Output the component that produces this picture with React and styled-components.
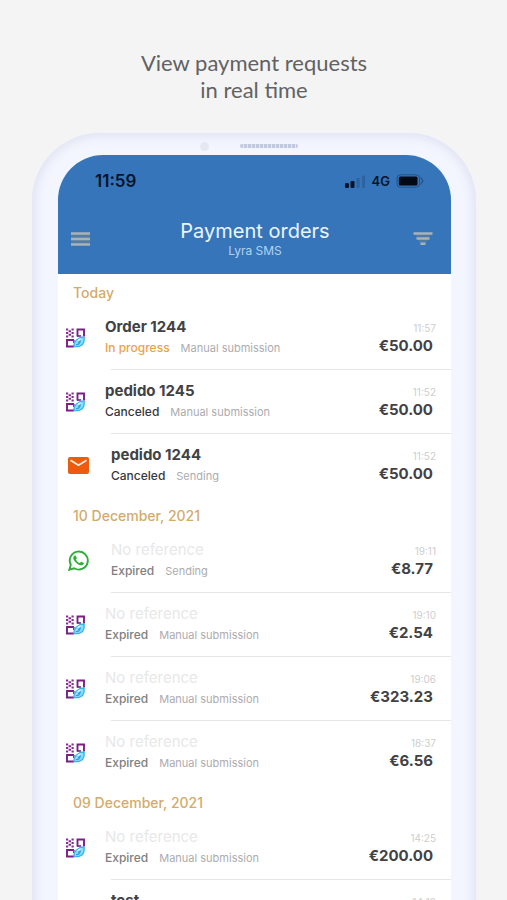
import React from 'react';
import styled, { createGlobalStyle } from 'styled-components';

const GlobalStyle = createGlobalStyle`
  * {
    box-sizing: border-box;
  }
  body {
    margin: 0;
    background: #f4f4f4;
    font-family: Inter, 'Liberation Sans', sans-serif;
  }
`;

const Page = styled.main`
  height: 100vh;
  overflow: hidden;
  padding: 49px 31px 0 32px;
`;

const Caption = styled.h1`
  margin: 0 0 30px;
  color: #626262;
  font-family: Lato, sans-serif;
  font-size: 22px;
  font-weight: 400;
  line-height: 27px;
  text-align: center;
`;

const Phone = styled.div`
  padding: 0 25px 60px 26px;
  border-radius: 68px 68px 0 0;
  background: #f3f6fe;
  box-shadow: inset 0 0 12px 2px #dcdff0, 0 0 1px #e8e9f2;
`;

const Bezel = styled.div`
  display: flex;
  align-items: center;
  justify-content: center;
  gap: 31px;
  height: 22px;
  padding: 4px 12px 0 0;
`;

const Camera = styled.span`
  width: 9px;
  height: 9px;
  border-radius: 50%;
  background: #e5e8f2;
`;

const Speaker = styled.span`
  width: 58px;
  height: 4px;
  border-radius: 2px;
  background: repeating-linear-gradient(90deg, #c3cae0 0 3px, #e2e6f3 3px 4px);
`;

const Screen = styled.div`
  overflow: hidden;
  border-radius: 45px 45px 0 0;
  background: #fff;
`;

const Top = styled.header`
  padding-bottom: 12px;
  background: #3675b9;
`;

const StatusBar = styled.div`
  display: flex;
  align-items: center;
  justify-content: space-between;
  height: 52px;
  padding: 0 27px 0 37px;
  color: #06142b;
`;

const Clock = styled.time`
  font-size: 17px;
  font-weight: 600;
`;

const Signals = styled.div`
  display: flex;
  align-items: center;
  gap: 6px;
  font-size: 13px;
  font-weight: 600;
`;

const NavBar = styled.div`
  display: grid;
  grid-template-columns: 20px 1fr 20px;
  align-items: center;
  height: 55px;
  padding: 9px 18px 0 13px;
`;

const IconButton = styled.button`
  display: flex;
  padding: 0;
  border: 0;
  background: none;
  cursor: pointer;
`;

const Heading = styled.div`
  padding-left: 6px;
  text-align: center;
`;

const ScreenTitle = styled.h2`
  margin: 0;
  color: #eaf6ff;
  font-size: 20px;
  font-weight: 400;
  line-height: 24px;
`;

const Merchant = styled.p`
  margin: 0;
  color: #b4d2f0;
  font-size: 12px;
  line-height: 16px;
`;

const DayTitle = styled.h3`
  height: 32px;
  margin: 0;
  padding: 6px 15px 0;
  color: #d3ab6b;
  font-size: 14px;
  font-weight: 500;
  line-height: 26px;
`;

const Orders = styled.ul`
  margin: 0;
  padding: 0;
  list-style: none;
`;

const Order = styled.li`
  display: flex;
  align-items: center;
  gap: ${(props) => (props.$wide ? '22px' : '20px')};
  padding-left: ${(props) => (props.$wide ? '10px' : '8px')};

  &:not(:last-child) {
    background: linear-gradient(#e6e6e8, #e6e6e8) 53px 100% / 100% 1px no-repeat;
    padding-bottom: 1px;
  }
`;

const Details = styled.div`
  flex: 1;
  height: 63px;
  padding-top: 11px;
`;

const Reference = styled.div`
  color: ${(props) => (props.$empty ? '#e8e8e8' : '#424244')};
  font-size: 15px;
  font-weight: ${(props) => (props.$empty ? 400 : 700)};
  line-height: 20px;
`;

const Meta = styled.div`
  display: flex;
  gap: 11px;
  padding-top: 2px;
  font-size: 12px;
  line-height: 18px;
`;

const statusColors = {
  'In progress': '#eda244',
  Canceled: '#38383a',
  Expired: '#808082',
};

const Status = styled.span`
  color: ${(props) => statusColors[props.children]};
  font-weight: 500;
`;

const Method = styled.span`
  color: #acacae;
  font-size: 11px;
`;

const Totals = styled.div`
  height: 63px;
  padding: 15px 18px 0 0;
  text-align: right;
`;

const Time = styled.time`
  display: block;
  margin-right: -3px;
  color: #cecece;
  font-size: 10px;
  line-height: 14px;
`;

const Amount = styled.div`
  padding-top: 1px;
  color: #424244;
  font-size: 15px;
  font-weight: 700;
  line-height: 20px;
`;

const MenuIcon = () => (
  <svg width='20' height='14' viewBox='0 0 20 14' aria-hidden='true'>
    <path d='M0 1h19v12H0z' fill='#607f9c' opacity='0.8' />
    <path d='M0 1.5h19M0 7h19M0 12.5h19' stroke='#a8b3b6' strokeWidth='2.4' />
  </svg>
);

const FilterIcon = () => (
  <svg width='20' height='14' viewBox='0 0 20 14' aria-hidden='true'>
    <path d='M1 1h18l-7 12H8z' fill='#607f9c' opacity='0.6' />
    <path d='M0.5 1.5h19M3.5 6.5h13M7.5 11.8h5' stroke='#a8b3b6' strokeWidth='2.4' />
  </svg>
);

const SignalIcon = () => (
  <svg width='21' height='13' viewBox='0 0 21 13' aria-hidden='true'>
    <rect x='0' y='8' width='4' height='5' rx='1.2' fill='#06142b' />
    <rect x='5.5' y='6' width='4' height='7' rx='1.2' fill='#06142b' />
    <rect x='11.5' y='3' width='3' height='10' rx='1' fill='#2d63a0' />
    <rect x='17' y='0.5' width='3' height='12.5' rx='1' fill='#2d63a0' />
  </svg>
);

const BatteryIcon = () => (
  <svg width='28' height='14' viewBox='0 0 28 14' aria-hidden='true'>
    <rect x='1' y='0.8' width='22.5' height='12.4' rx='3.5' fill='none' stroke='#235288' />
    <rect x='2.8' y='2.5' width='18.7' height='9' rx='1.5' fill='#020814' />
    <path d='M24.5 3.5L27 7l-2.5 3.5' fill='none' stroke='#235288' strokeWidth='1.2' />
  </svg>
);

const ManualIcon = () => (
  <svg width='19' height='20' viewBox='0 0 19 20' role='img' aria-label='Manual'>
    <path
      d='M0 .5h2.200v2H0zM5.500 .5h2.200v2H5.500zM2.600 2.200h2.400v2H2.600zM0 4h2.200v2H0zM5.500 4h2.200v2H5.500zM2.600 5.800h2.400v2H2.600zM0 7.500h2.200v2H0zM5.500 7.500h2.200v2H5.500z'
      fill='#84308f'
    />
    <path d='M11.500 8.500V1.500h6.500v7' fill='none' stroke='#7a1f86' strokeWidth='1.900' />
    <path d='M11 8h4' stroke='#7a1f86' strokeWidth='1.600' />
    <path d='M8 12H1v6.500h7' fill='none' stroke='#7a1f86' strokeWidth='1.900' />
    <path d='M7.800 12v3' stroke='#6a3ca0' strokeWidth='1.600' />
    <path
      d='M8 18.600h4.500c3.500-1 5.600-3.400 5.600-6.500V9.200h-3.600l-4.300 3c-1.600 1.300-2.400 3.200-2.200 4.600z'
      fill='#8fdcf8'
      stroke='#35b6ee'
      strokeWidth='1.400'
      strokeLinejoin='round'
    />
    <path d='M10 16.500c2.500.3 4-1 4.200-3.300l-2.200 1.300' fill='none' stroke='#2d9fe6' strokeWidth='1.200' />
    <path d='M14.500 10.700l-3 2' stroke='#f2fbff' strokeWidth='1.200' />
  </svg>
);

const MailIcon = () => (
  <svg width='21' height='17' viewBox='0 0 21 17' role='img' aria-label='Email'>
    <rect width='21' height='17' rx='2' fill='#ee5a0e' />
    <path d='M2.500 3.200l8 5 8-5' fill='none' stroke='#fff1e6' strokeWidth='1.700' />
  </svg>
);

const WhatsappIcon = () => (
  <svg width='21' height='21' viewBox='0 0 24 24' role='img' aria-label='WhatsApp'>
    <path
      fill='#2fae3b'
      d='M17.472 14.382c-.297-.149-1.758-.867-2.030-.967-.273-.099-.471-.148-.67.150-.197.297-.767.966-.940 1.164-.173.199-.347.223-.644.075-.297-.150-1.255-.463-2.390-1.475-.883-.788-1.480-1.761-1.653-2.059-.173-.297-.018-.458.130-.606.134-.133.298-.347.446-.520.149-.174.198-.298.298-.497.099-.198.050-.371-.025-.520-.075-.149-.669-1.612-.916-2.207-.242-.579-.487-.500-.669-.510-.173-.008-.371-.010-.570-.010-.198 0-.520.074-.792.372-.272.297-1.040 1.016-1.040 2.479 0 1.462 1.065 2.875 1.213 3.074.149.198 2.096 3.200 5.077 4.487.709.306 1.262.489 1.694.625.712.227 1.360.195 1.871.118.571-.085 1.758-.719 2.006-1.413.248-.694.248-1.289.173-1.413-.074-.124-.272-.198-.570-.347z'
    />
    <path d='M1.500 22.500l1.700-5.700A10.300 10.300 0 1 1 7.100 20.900z' fill='none' stroke='#2fae3b' strokeWidth='2.200' />
  </svg>
);

const icons = {
  manual: ManualIcon,
  mail: MailIcon,
  whatsapp: WhatsappIcon,
};

const days = [
  {
    title: 'Today',
    orders: [
      { icon: 'manual', name: 'Order 1244', status: 'In progress', time: '11:57', amount: '€50.00' },
      { icon: 'manual', name: 'pedido 1245', status: 'Canceled', time: '11:52', amount: '€50.00' },
      { icon: 'mail', name: 'pedido 1244', status: 'Canceled', time: '11:52', amount: '€50.00' },
    ],
  },
  {
    title: '10 December, 2021',
    orders: [
      { icon: 'whatsapp', status: 'Expired', time: '19:11', amount: '€8.77' },
      { icon: 'manual', status: 'Expired', time: '19:10', amount: '€2.54' },
      { icon: 'manual', status: 'Expired', time: '19:06', amount: '€323.23' },
      { icon: 'manual', status: 'Expired', time: '18:37', amount: '€6.56' },
    ],
  },
  {
    title: '09 December, 2021',
    orders: [
      { icon: 'manual', status: 'Expired', time: '14:25', amount: '€200.00' },
      { icon: 'mail', name: 'test', status: 'Expired', time: '14:19', amount: '€50.00' },
    ],
  },
];

const OrderRow = ({ order }) => {
  const Icon = icons[order.icon];
  const manual = order.icon === 'manual';

  return (
    <Order $wide={!manual}>
      <Icon />
      <Details>
        <Reference $empty={!order.name}>{order.name || 'No reference'}</Reference>
        <Meta>
          <Status>{order.status}</Status>
          <Method>{manual ? 'Manual submission' : 'Sending'}</Method>
        </Meta>
      </Details>
      <Totals>
        <Time>{order.time}</Time>
        <Amount>{order.amount}</Amount>
      </Totals>
    </Order>
  );
};

export default function App() {
  return (
    <Page>
      <GlobalStyle />
      <Caption>
        View payment requests
        <br />
        in real time
      </Caption>
      <Phone>
        <Bezel>
          <Camera />
          <Speaker />
        </Bezel>
        <Screen>
          <Top>
            <StatusBar>
              <Clock>11:59</Clock>
              <Signals>
                <SignalIcon />
                4G
                <BatteryIcon />
              </Signals>
            </StatusBar>
            <NavBar>
              <IconButton aria-label='Menu'>
                <MenuIcon />
              </IconButton>
              <Heading>
                <ScreenTitle>Payment orders</ScreenTitle>
                <Merchant>Lyra SMS</Merchant>
              </Heading>
              <IconButton aria-label='Filter'>
                <FilterIcon />
              </IconButton>
            </NavBar>
          </Top>
          {days.map((day) => (
            <section key={day.title}>
              <DayTitle>{day.title}</DayTitle>
              <Orders>
                {day.orders.map((order, index) => (
                  <OrderRow key={index} order={order} />
                ))}
              </Orders>
            </section>
          ))}
        </Screen>
      </Phone>
    </Page>
  );
}
